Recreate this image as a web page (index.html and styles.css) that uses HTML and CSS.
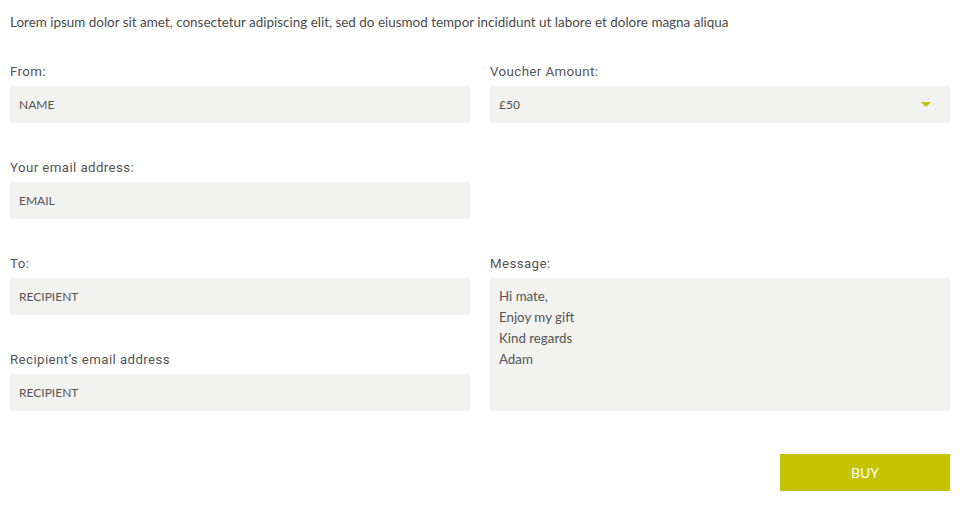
FILE: index.html
```html
<!DOCTYPE html>
<html>
<head>
<meta charset="utf-8">
<link rel="stylesheet" href="styles.css">
</head>
<body>
<p class="intro">Lorem ipsum dolor sit amet, consectetur adipiscing elit, sed do eiusmod tempor incididunt ut labore et dolore magna aliqua</p>
<form class="form">
  <div class="field f-from">
    <label class="label">From:</label>
    <div class="input">NAME</div>
  </div>
  <div class="field f-amount">
    <label class="label">Voucher Amount:</label>
    <div class="input select">£50<span class="caret"></span></div>
  </div>
  <div class="field f-email">
    <label class="label">Your email address:</label>
    <div class="input">EMAIL</div>
  </div>
  <div class="field f-to">
    <label class="label">To:</label>
    <div class="input">RECIPIENT</div>
  </div>
  <div class="field f-msg">
    <label class="label">Message:</label>
    <div class="textarea">Hi mate,<br>Enjoy my gift<br>Kind regards<br>Adam</div>
  </div>
  <div class="field f-remail">
    <label class="label">Recipient’s email address</label>
    <div class="input">RECIPIENT</div>
  </div>
</form>
<div class="actions"><button class="buy" type="button">BUY</button></div>
</body>
</html>
```
FILE: styles.css
```css
html, body { margin: 0; padding: 0; background: #fff; }
body { padding: 0 10px; color: #555; font-family: "Lato", "Open Sans", sans-serif; }
.intro { margin: 0; padding-top: 14px; font-size: 13.45px; line-height: 16px; color: #4a4a4a; height: 16px; }
.form {
  margin-top: 30px;
  display: grid;
  grid-template-columns: 460px 460px;
  column-gap: 20px;
  grid-template-rows: 63px 63px 63px 63px;
  row-gap: 33px;
}
.field { display: flex; flex-direction: column; }
.f-from { grid-column: 1; grid-row: 1; }
.f-amount { grid-column: 2; grid-row: 1; }
.f-email { grid-column: 1; grid-row: 2; }
.f-to { grid-column: 1; grid-row: 3; }
.f-remail { grid-column: 1; grid-row: 4; }
.f-msg { grid-column: 2; grid-row: 3 / span 2; }
.label {
  font-family: "Roboto", "DejaVu Sans", sans-serif;
  font-size: 13.3px; line-height: 18px; height: 18px; padding-top: 3px; margin-bottom: 5px; color: #555;
  letter-spacing: 0.4px;
}
.input {
  height: 37px; background: #f2f2f0; box-sizing: border-box; padding: 0 9px;
  display: flex; align-items: center; font-size: 12px; color: #555; position: relative;
}
.caret {
  position: absolute; right: 19px; top: 16px; width: 0; height: 0;
  border-left: 5px solid transparent; border-right: 5px solid transparent; border-top: 5px solid #c5c300;
}
.textarea {
  flex: 1; background: #f2f2f0; padding: 8px 9px 6px; font-size: 13.3px; line-height: 21px; color: #555;
}
.actions { display: flex; justify-content: flex-end; margin-top: 43px; }
.buy {
  width: 170px; height: 37px; border: 0; background: #c5c300; color: #fff;
  font-family: "Lato", "Open Sans", sans-serif; font-size: 14px; padding: 0; cursor: pointer;
}
```
